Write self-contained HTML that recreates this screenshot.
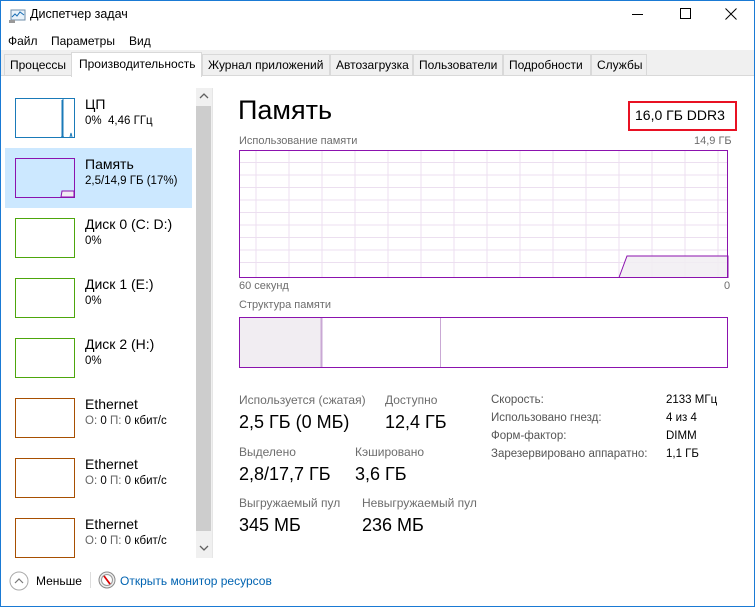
<!DOCTYPE html>
<html><head><meta charset="utf-8"><style>
*{margin:0;padding:0;box-sizing:border-box}
body{width:755px;height:607px;overflow:hidden;background:#fff;font-family:"Liberation Sans","DejaVu Sans",sans-serif;color:#000;position:relative}
.a{position:absolute;white-space:nowrap}
.tab{position:absolute;top:54px;height:22px;background:#f0f0f0;border:1px solid #d9d9d9;font-size:12px;padding:3px 0 0 5px}
.th{position:absolute;left:15px;width:60px;height:40px;border:1px solid}
.nm{position:absolute;left:85px;font-size:14px}
.sb{position:absolute;left:85px;font-size:11.5px}
.lbl{position:absolute;font-size:12px;color:#6d6d6d}
.val{position:absolute;font-size:18px}
.r{position:absolute;font-size:11.5px;color:#555}
.rv{position:absolute;left:666px;font-size:11.5px}
</style></head><body>
<div class="a" style="left:0;top:0;width:755px;height:607px;border:1px solid #1a7ad4;border-top:none"></div>
<div class="a" style="left:0;top:0;width:755px;height:1px;background:#1a7ad4"></div>
<!-- title -->
<svg class="a" style="left:8px;top:9px" width="18" height="15"><rect x="3" y="1" width="14" height="10" fill="#e8f2fa" stroke="#6e8da8"/><polyline points="4,8 7,5 9,7 12,3 16,6" fill="none" stroke="#1b6fb5"/><rect x="1" y="11" width="6" height="3" fill="#999"/></svg>
<div class="a" style="left:30px;top:7px;font-size:12.5px">Диспетчер задач</div>
<div class="a" style="left:632px;top:14px;width:11px;height:1px;background:#000"></div>
<div class="a" style="left:680px;top:8px;width:11px;height:11px;border:1px solid #000"></div>
<svg class="a" style="left:725px;top:8px" width="12" height="12"><path d="M0.5 0.5L11.5 11.5M11.5 0.5L0.5 11.5" stroke="#000"/></svg>
<div class="a" style="left:8px;top:34px;font-size:12px">Файл</div>
<div class="a" style="left:51px;top:34px;font-size:12px">Параметры</div>
<div class="a" style="left:129px;top:34px;font-size:12px">Вид</div>
<!-- tabs -->
<div class="a" style="left:1px;top:50px;width:753px;height:26px;background:#f0f0f0;border-bottom:1px solid #d9d9d9"></div>
<div class="tab" style="left:4px;width:68px">Процессы</div>
<div class="a" style="left:71px;top:52px;width:131px;height:25px;background:#fff;border:1px solid #d9d9d9;border-bottom:none;font-size:12px;padding:4px 0 0 7px">Производительность</div>
<div class="tab" style="left:202px;width:128px">Журнал приложений</div>
<div class="tab" style="left:330px;width:83px">Автозагрузка</div>
<div class="tab" style="left:413px;width:90px">Пользователи</div>
<div class="tab" style="left:503px;width:88px">Подробности</div>
<div class="tab" style="left:591px;width:56px">Службы</div>
<!-- sidebar -->
<div class="a" style="left:5px;top:148px;width:187px;height:60px;background:#cce8ff"></div>
<div class="th" style="top:98px;border-color:#1a7ab8"></div>
<svg class="a" style="left:15px;top:98px" width="60" height="40"><path d="M46 39 L47 39 L47 2 L48 39 L49 39 M48 1 L48 39 M55 39 L56 35 L57 39" stroke="#1a7ab8" fill="none"/></svg>
<div class="nm" style="top:96px">ЦП</div><div class="sb" style="top:115px">0%&nbsp; 4,46 ГГц</div>
<div class="th" style="top:158px;border-color:#8b12ae"></div>
<svg class="a" style="left:15px;top:158px" width="60" height="40"><path d="M46 39 L47 33 L59 33 L59 39 Z" fill="#f1edf2" stroke="#8b12ae"/></svg>
<div class="nm" style="top:156px">Память</div><div class="sb" style="top:175px">2,5/14,9 ГБ (17%)</div>
<div class="th" style="top:218px;border-color:#4da60c"></div>
<div class="nm" style="top:216px">Диск 0 (C: D:)</div><div class="sb" style="top:235px">0%</div>
<div class="th" style="top:278px;border-color:#4da60c"></div>
<div class="nm" style="top:276px">Диск 1 (E:)</div><div class="sb" style="top:295px">0%</div>
<div class="th" style="top:338px;border-color:#4da60c"></div>
<div class="nm" style="top:336px">Диск 2 (H:)</div><div class="sb" style="top:355px">0%</div>
<div class="th" style="top:398px;border-color:#a74f01"></div>
<div class="nm" style="top:396px">Ethernet</div><div class="sb" style="top:415px"><span style="color:#666">О:</span> 0 <span style="color:#666">П:</span> 0 кбит/с</div>
<div class="th" style="top:458px;border-color:#a74f01"></div>
<div class="nm" style="top:456px">Ethernet</div><div class="sb" style="top:475px"><span style="color:#666">О:</span> 0 <span style="color:#666">П:</span> 0 кбит/с</div>
<div class="th" style="top:518px;border-color:#a74f01"></div>
<div class="nm" style="top:516px">Ethernet</div><div class="sb" style="top:535px"><span style="color:#666">О:</span> 0 <span style="color:#666">П:</span> 0 кбит/с</div>
<!-- scrollbar -->
<div class="a" style="left:196px;top:88px;width:16px;height:470px;background:#f0f0f0"></div>
<div class="a" style="left:196px;top:106px;width:15px;height:425px;background:#cdcdcd"></div>
<svg class="a" style="left:199px;top:93px" width="10" height="6"><path d="M1 5L5 1L9 5" stroke="#606060" fill="none" stroke-width="1.3"/></svg>
<svg class="a" style="left:199px;top:545px" width="10" height="6"><path d="M1 1L5 5L9 1" stroke="#606060" fill="none" stroke-width="1.3"/></svg>
<div class="a" style="left:212px;top:88px;width:1px;height:470px;background:#e6e6e6"></div>
<!-- main -->
<div class="a" style="left:238px;top:95px;font-size:27px">Память</div>
<div class="a" style="left:628px;top:101px;width:109px;height:30px;border:2px solid #e81123"></div>
<div class="a" style="left:635px;top:107px;font-size:14px">16,0 ГБ DDR3</div>
<div class="lbl" style="left:239px;top:135px;font-size:11px">Использование памяти</div>
<div class="lbl" style="left:694px;top:135px;font-size:11px">14,9 ГБ</div>
<svg class="a" style="left:239px;top:150px" width="490" height="128">
<g stroke="#ecdff0" stroke-width="1">
<path d="M17 0V127M50 0V127M83 0V127M116 0V127M149 0V127M182 0V127M215 0V127M248 0V127M281 0V127M314 0V127M347 0V127M380 0V127M413 0V127M446 0V127M479 0V127"/>
<path d="M0 12.5H489M0 25H489M0 37.5H489M0 50H489M0 62.5H489M0 75H489M0 87.5H489M0 100H489M0 112.5H489"/>
</g>
<path d="M380 127.5L388 106H489V127.5Z" fill="#f1edf2" fill-opacity="0.85" stroke="#8b12ae"/>
<rect x="0.5" y="0.5" width="488" height="127" fill="none" stroke="#8b12ae"/>
</svg>
<div class="lbl" style="left:239px;top:280px;font-size:11px">60 секунд</div>
<div class="lbl" style="left:724px;top:280px;font-size:11px">0</div>
<div class="lbl" style="left:239px;top:299px;font-size:11px">Структура памяти</div>
<svg class="a" style="left:239px;top:317px" width="490" height="51">
<rect x="0" y="0" width="82" height="50" fill="#f1edf2"/>
<path d="M82.5 0V50" stroke="#c9a8d4" stroke-width="2"/>
<path d="M201.5 0V50" stroke="#c9a8d4"/>
<rect x="0.5" y="0.5" width="488" height="50" fill="none" stroke="#8b12ae"/>
</svg>
<div class="lbl" style="left:239px;top:393px">Используется (сжатая)</div>
<div class="val" style="left:239px;top:412px">2,5 ГБ (0 МБ)</div>
<div class="lbl" style="left:385px;top:393px">Доступно</div>
<div class="val" style="left:385px;top:412px">12,4 ГБ</div>
<div class="lbl" style="left:239px;top:445px">Выделено</div>
<div class="val" style="left:239px;top:464px">2,8/17,7 ГБ</div>
<div class="lbl" style="left:355px;top:445px">Кэшировано</div>
<div class="val" style="left:355px;top:464px">3,6 ГБ</div>
<div class="lbl" style="left:239px;top:496px">Выгружаемый пул</div>
<div class="val" style="left:239px;top:515px">345 МБ</div>
<div class="lbl" style="left:362px;top:496px">Невыгружаемый пул</div>
<div class="val" style="left:362px;top:515px">236 МБ</div>
<div class="r" style="left:491px;top:394px">Скорость:</div><div class="rv" style="top:394px">2133 МГц</div>
<div class="r" style="left:491px;top:412px">Использовано гнезд:</div><div class="rv" style="top:412px">4 из 4</div>
<div class="r" style="left:491px;top:430px">Форм-фактор:</div><div class="rv" style="top:430px">DIMM</div>
<div class="r" style="left:491px;top:448px">Зарезервировано аппаратно:</div><div class="rv" style="top:448px">1,1 ГБ</div>
<!-- footer -->
<svg class="a" style="left:9px;top:571px" width="20" height="20"><circle cx="10" cy="10" r="9" fill="none" stroke="#aaa"/><path d="M6 12L10 8L14 12" stroke="#777" fill="none" stroke-width="1.2"/></svg>
<div class="a" style="left:36px;top:574px;font-size:12px">Меньше</div>
<div class="a" style="left:90px;top:572px;width:1px;height:16px;background:#ddd"></div>
<svg class="a" style="left:98px;top:571px" width="18" height="18"><circle cx="9" cy="9" r="8" fill="#eee" stroke="#888"/><circle cx="9" cy="9" r="5.5" fill="#fff" stroke="#999"/><path d="M6 5L12 13" stroke="#d00" stroke-width="1.8"/></svg>
<div class="a" style="left:120px;top:574px;font-size:12px;color:#0063b1">Открыть монитор ресурсов</div>
</body></html>
